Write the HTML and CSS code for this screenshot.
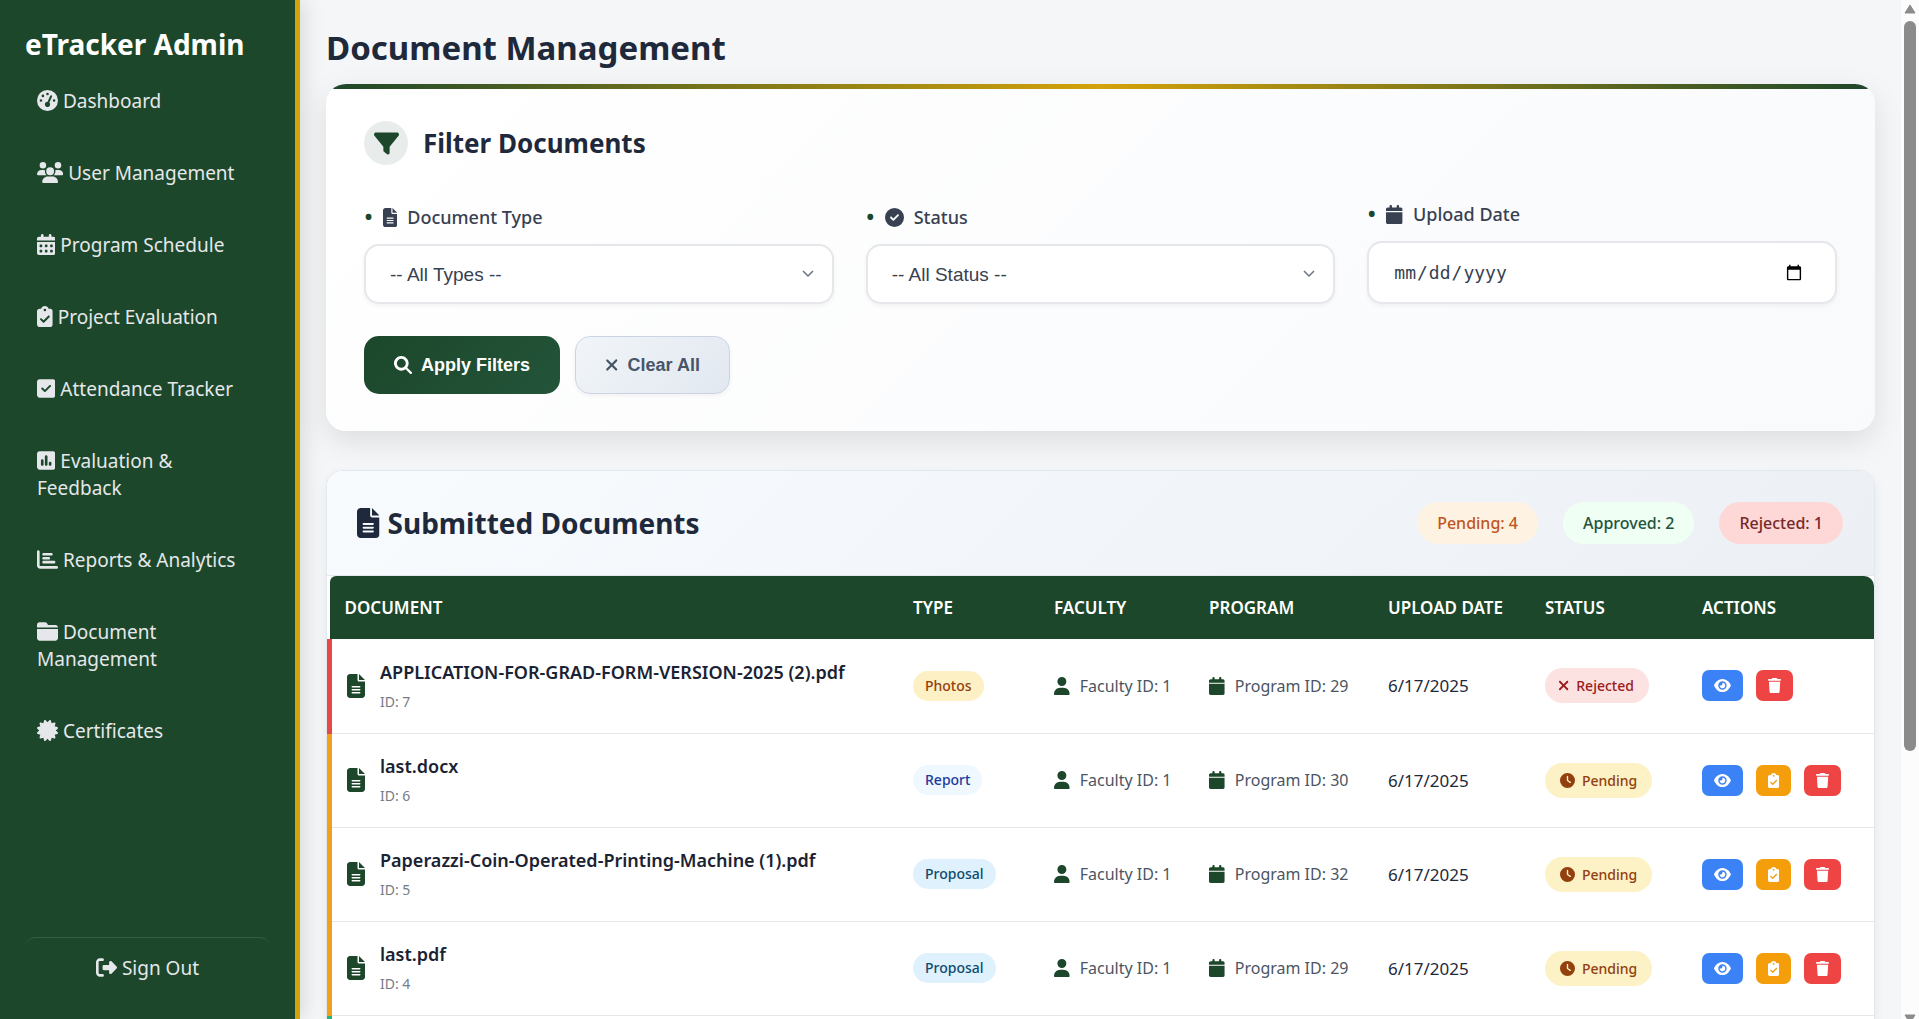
FILE: index.html
```html
<!DOCTYPE html>
<html lang="en">
<head>
<meta charset="utf-8">
<meta name="viewport" content="width=device-width, initial-scale=1">
<title>eTracker Admin - Document Management</title>
<link rel="stylesheet" href="styles.css">
</head>
<body>
<svg class="sprite" aria-hidden="true">
  <symbol id="i-gauge" viewBox="0 0 512 512"><path d="M0 256a256 256 0 1 1 512 0A256 256 0 1 1 0 256zM288 96a32 32 0 1 0 -64 0 32 32 0 1 0 64 0zM256 416c35.3 0 64-28.7 64-64c0-17.4-6.9-33.1-18.1-44.6L366 161.7c5.3-12.1-.2-26.3-12.3-31.6s-26.3 .2-31.6 12.3L257.9 288c-.6 0-1.3 0-1.9 0c-35.3 0-64 28.7-64 64s28.7 64 64 64zM176 144a32 32 0 1 0 -64 0 32 32 0 1 0 64 0zM96 288a32 32 0 1 0 0-64 32 32 0 1 0 0 64zm352-32a32 32 0 1 0 -64 0 32 32 0 1 0 64 0z"/></symbol>
  <symbol id="i-users" viewBox="0 0 640 512"><path d="M144 0a80 80 0 1 1 0 160A80 80 0 1 1 144 0zM512 0a80 80 0 1 1 0 160A80 80 0 1 1 512 0zM0 298.7C0 239.8 47.8 192 106.7 192h42.7c15.9 0 31 3.5 44.6 9.7c-1.3 7.2-1.9 14.7-1.9 22.3c0 38.2 16.8 72.5 43.3 96c-.2 0-.4 0-.7 0H21.3C9.6 320 0 310.4 0 298.7zM405.3 320c-.2 0-.4 0-.7 0c26.6-23.5 43.3-57.8 43.3-96c0-7.6-.7-15-1.9-22.3c13.6-6.3 28.7-9.7 44.6-9.7h42.7C592.2 192 640 239.8 640 298.7c0 11.8-9.6 21.3-21.3 21.3H405.3zM224 224a96 96 0 1 1 192 0 96 96 0 1 1 -192 0zM128 485.3C128 411.7 187.7 352 261.3 352H378.7C452.3 352 512 411.7 512 485.3c0 14.7-11.9 26.7-26.7 26.7H154.7c-14.7 0-26.7-11.9-26.7-26.7z"/></symbol>
  <symbol id="i-days" viewBox="0 0 448 512"><path d="M128 0c17.7 0 32 14.3 32 32V64H288V32c0-17.7 14.3-32 32-32s32 14.3 32 32V64h48c26.5 0 48 21.5 48 48v48H0V112C0 85.5 21.5 64 48 64H96V32c0-17.7 14.3-32 32-32zM0 192H448V464c0 26.5-21.5 48-48 48H48c-26.5 0-48-21.5-48-48V192zm64 80v32c0 8.8 7.2 16 16 16h32c8.8 0 16-7.2 16-16V272c0-8.8-7.2-16-16-16H80c-8.8 0-16 7.2-16 16zm128 0v32c0 8.8 7.2 16 16 16h32c8.8 0 16-7.2 16-16V272c0-8.8-7.2-16-16-16H208c-8.8 0-16 7.2-16 16zm144-16c-8.8 0-16 7.2-16 16v32c0 8.8 7.2 16 16 16h32c8.8 0 16-7.2 16-16V272c0-8.8-7.2-16-16-16H336zM64 400v32c0 8.8 7.2 16 16 16h32c8.8 0 16-7.2 16-16V400c0-8.8-7.2-16-16-16H80c-8.8 0-16 7.2-16 16zm144-16c-8.8 0-16 7.2-16 16v32c0 8.8 7.2 16 16 16h32c8.8 0 16-7.2 16-16V400c0-8.8-7.2-16-16-16H208zm112 16v32c0 8.8 7.2 16 16 16h32c8.8 0 16-7.2 16-16V400c0-8.8-7.2-16-16-16H336c-8.8 0-16 7.2-16 16z"/></symbol>
  <symbol id="i-calendar" viewBox="0 0 448 512"><path d="M96 32V64H48C21.5 64 0 85.5 0 112v48H448V112c0-26.5-21.5-48-48-48H352V32c0-17.7-14.3-32-32-32s-32 14.3-32 32V64H160V32c0-17.7-14.3-32-32-32S96 14.3 96 32zM448 192H0V464c0 26.5 21.5 48 48 48H400c26.5 0 48-21.5 48-48V192z"/></symbol>
  <symbol id="i-clipboard" viewBox="0 0 384 512"><path d="M192 0c-41.8 0-77.4 26.7-90.5 64H64C28.7 64 0 92.7 0 128V448c0 35.3 28.7 64 64 64H320c35.3 0 64-28.7 64-64V128c0-35.3-28.7-64-64-64H282.5C269.4 26.7 233.8 0 192 0zm0 64a32 32 0 1 1 0 64 32 32 0 1 1 0-64zM305 273L177 401c-9.4 9.4-24.6 9.4-33.9 0L79 337c-9.4-9.4-9.4-24.6 0-33.9s24.6-9.4 33.9 0l47 47L271 239c9.4-9.4 24.6-9.4 33.9 0s9.4 24.6 0 33.9z"/></symbol>
  <symbol id="i-square-check" viewBox="0 0 448 512"><path d="M64 32C28.7 32 0 60.7 0 96V416c0 35.3 28.7 64 64 64H384c35.3 0 64-28.7 64-64V96c0-35.3-28.7-64-64-64H64zM337 209L209 337c-9.4 9.4-24.6 9.4-33.9 0l-64-64c-9.4-9.4-9.4-24.6 0-33.9s24.6-9.4 33.9 0l47 47L303 175c9.4-9.4 24.6-9.4 33.9 0s9.4 24.6 0 33.9z"/></symbol>
  <symbol id="i-poll" viewBox="0 0 448 512"><path fill-rule="evenodd" d="M448 96c0-35.3-28.7-64-64-64H64C28.7 32 0 60.7 0 96V416c0 35.3 28.7 64 64 64H384c35.3 0 64-28.7 64-64V96zM256 160V352c0 17.7-14.3 32-32 32s-32-14.3-32-32V160c0-17.7 14.3-32 32-32s32 14.3 32 32zM96 256v96c0 17.7 14.3 32 32 32s32-14.3 32-32V256c0-17.7-14.3-32-32-32s-32 14.3-32 32zM320 288c-17.7 0-32 14.3-32 32v32c0 17.7 14.3 32 32 32s32-14.3 32-32V320c0-17.7-14.3-32-32-32z"/></symbol>
  <symbol id="i-chart" viewBox="0 0 512 512"><path d="M32 32c17.7 0 32 14.3 32 32V400c0 8.8 7.2 16 16 16H480c17.7 0 32 14.3 32 32s-14.3 32-32 32H80c-44.2 0-80-35.8-80-80V64C0 46.3 14.3 32 32 32zm96 96c0-17.7 14.3-32 32-32l192 0c17.7 0 32 14.3 32 32s-14.3 32-32 32H160c-17.7 0-32-14.3-32-32zm32 64H288c17.7 0 32 14.3 32 32s-14.3 32-32 32H160c-17.7 0-32-14.3-32-32s14.3-32 32-32zm0 96H416c17.7 0 32 14.3 32 32s-14.3 32-32 32H160c-17.7 0-32-14.3-32-32s14.3-32 32-32z"/></symbol>
  <symbol id="i-folder" viewBox="0 0 512 512"><path d="M448 480H64c-35.3 0-64-28.7-64-64V192H512V416c0 35.3-28.7 64-64 64zm64-320H0V96C0 60.7 28.7 32 64 32H192c20.1 0 39.1 9.5 51.2 25.6l19.2 25.6c6 8.1 15.5 12.8 25.6 12.8H448c35.3 0 64 28.7 64 64z"/></symbol>
  <symbol id="i-certificate" viewBox="0 0 512 512"><path d="M211 7.3C205 1 196-1.4 187.6 .8s-14.9 8.9-17.1 17.3L154.7 80.6l-62-17.5c-8.4-2.4-17.4 0-23.5 6.1s-8.5 15.1-6.1 23.5l17.5 62L18.1 170.6c-8.4 2.1-15 8.7-17.3 17.1S1 205 7.3 211l46.2 45L7.3 301C1 307-1.4 316 .8 324.4s8.9 14.9 17.3 17.1l62.5 15.8-17.5 62c-2.4 8.4 0 17.4 6.1 23.5s15.1 8.5 23.5 6.1l62-17.5 15.8 62.5c2.1 8.4 8.7 15 17.1 17.3s17.3-.2 23.4-6.4l45-46.2 45 46.2c6.1 6.2 15 8.7 23.4 6.4s14.9-8.9 17.1-17.3l15.8-62.5 62 17.5c8.4 2.4 17.4 0 23.5-6.1s8.5-15.1 6.1-23.5l-17.5-62 62.5-15.8c8.4-2.1 15-8.7 17.3-17.1s-.2-17.4-6.4-23.4l-46.2-45 46.2-45c6.2-6.1 8.7-15 6.4-23.4s-8.9-14.9-17.3-17.1l-62.5-15.8 17.5-62c2.4-8.4 0-17.4-6.1-23.5s-15.1-8.5-23.5-6.1l-62 17.5L341.4 18.1c-2.1-8.4-8.7-15-17.1-17.3S307 1 301 7.3L256 53.5 211 7.3z"/></symbol>
  <symbol id="i-signout" viewBox="0 0 512 512"><path d="M377.9 105.9L500.7 228.7c7.2 7.2 11.3 17.1 11.3 27.3s-4.1 20.1-11.3 27.3L377.9 406.1c-6.4 6.4-15 9.9-24 9.9c-18.7 0-33.9-15.2-33.9-33.9l0-62.1-128 0c-17.7 0-32-14.3-32-32l0-64c0-17.7 14.3-32 32-32l128 0 0-62.1c0-18.7 15.2-33.9 33.9-33.9c9 0 17.6 3.6 24 9.9zM160 96L96 96c-17.7 0-32 14.3-32 32l0 256c0 17.7 14.3 32 32 32l64 0c17.7 0 32 14.3 32 32s-14.3 32-32 32l-64 0c-53 0-96-43-96-96L0 128C0 75 43 32 96 32l64 0c17.7 0 32 14.3 32 32s-14.3 32-32 32z"/></symbol>
  <symbol id="i-filter" viewBox="0 0 512 512"><path d="M3.9 54.9C10.5 40.9 24.5 32 40 32H472c15.5 0 29.5 8.9 36.1 22.9s4.6 30.5-5.2 42.5L320 320.9V448c0 12.1-6.8 23.2-17.7 28.6s-23.8 4.3-33.5-3l-64-48c-8.1-6-12.8-15.5-12.8-25.6V320.9L9 97.3C-.7 85.4-2.8 68.8 3.9 54.9z"/></symbol>
  <symbol id="i-file" viewBox="0 0 384 512"><path d="M64 0C28.7 0 0 28.7 0 64V448c0 35.3 28.7 64 64 64H320c35.3 0 64-28.7 64-64V160H256c-17.7 0-32-14.3-32-32V0H64zM256 0V128H384L256 0zM112 256H272c8.8 0 16 7.2 16 16s-7.2 16-16 16H112c-8.8 0-16-7.2-16-16s7.2-16 16-16zm0 64H272c8.8 0 16 7.2 16 16s-7.2 16-16 16H112c-8.8 0-16-7.2-16-16s7.2-16 16-16zm0 64H272c8.8 0 16 7.2 16 16s-7.2 16-16 16H112c-8.8 0-16-7.2-16-16s7.2-16 16-16z"/></symbol>
  <symbol id="i-circle-check" viewBox="0 0 512 512"><path d="M256 512A256 256 0 1 0 256 0a256 256 0 1 0 0 512zM369 209L241 337c-9.4 9.4-24.6 9.4-33.9 0l-64-64c-9.4-9.4-9.4-24.6 0-33.9s24.6-9.4 33.9 0l47 47L335 175c9.4-9.4 24.6-9.4 33.9 0s9.4 24.6 0 33.9z"/></symbol>
  <symbol id="i-search" viewBox="0 0 512 512"><path d="M416 208c0 45.9-14.9 88.3-40 122.7L502.6 457.4c12.5 12.5 12.5 32.8 0 45.3s-32.8 12.5-45.3 0L330.7 376c-34.4 25.2-76.8 40-122.7 40C93.1 416 0 322.9 0 208S93.1 0 208 0S416 93.1 416 208zM208 336a128 128 0 1 0 0-256 128 128 0 1 0 0 256z"/></symbol>
  <symbol id="i-x" viewBox="0 0 384 512"><path d="M342.6 150.6c12.5-12.5 12.5-32.8 0-45.3s-32.8-12.5-45.3 0L192 210.7 86.6 105.4c-12.5-12.5-32.8-12.5-45.3 0s-12.5 32.8 0 45.3L146.7 256 41.4 361.4c-12.5 12.5-12.5 32.8 0 45.3s32.8 12.5 45.3 0L192 301.3 297.4 406.6c12.5 12.5 32.8 12.5 45.3 0s12.5-32.8 0-45.3L237.3 256 342.6 150.6z"/></symbol>
  <symbol id="i-user" viewBox="0 0 448 512"><path d="M224 256A128 128 0 1 0 224 0a128 128 0 1 0 0 256zm-45.7 48C79.8 304 0 383.8 0 482.3C0 498.7 13.3 512 29.7 512H418.3c16.4 0 29.7-13.3 29.7-29.7C448 383.8 368.2 304 269.7 304H178.3z"/></symbol>
  <symbol id="i-clock" viewBox="0 0 512 512"><path d="M256 0a256 256 0 1 1 0 512A256 256 0 1 1 256 0zM232 120V256c0 8 4 15.5 10.7 20l96 64c11 7.4 25.9 4.4 33.3-6.7s4.4-25.9-6.7-33.3L280 243.2V120c0-13.3-10.7-24-24-24s-24 10.7-24 24z"/></symbol>
  <symbol id="i-eye" viewBox="0 0 576 512"><path d="M288 32c-80.8 0-145.5 36.8-192.6 80.6C48.6 156 17.3 208 2.5 243.7c-3.3 7.9-3.3 16.7 0 24.6C17.3 304 48.6 356 95.4 399.4C142.5 443.2 207.2 480 288 480s145.5-36.8 192.6-80.6c46.8-43.5 78.1-95.4 93-131.1c3.3-7.9 3.3-16.7 0-24.6c-14.9-35.7-46.2-87.7-93-131.1C433.5 68.8 368.8 32 288 32zM144 256a144 144 0 1 1 288 0 144 144 0 1 1 -288 0zm144-64c0 35.3-28.7 64-64 64c-7.1 0-13.9-1.2-20.3-3.3c-5.5-1.8-11.9 1.6-11.7 7.4c.3 6.9 1.3 13.8 3.2 20.7c13.7 51.2 66.4 81.6 117.6 67.9s81.6-66.4 67.9-117.6c-11.1-41.5-47.8-69.4-88.6-71.1c-5.8-.2-9.2 6.1-7.4 11.7c2.1 6.4 3.3 13.2 3.3 20.3z"/></symbol>
  <symbol id="i-trash" viewBox="0 0 448 512"><path d="M135.2 17.7L128 32H32C14.3 32 0 46.3 0 64S14.3 96 32 96H416c17.7 0 32-14.3 32-32s-14.3-32-32-32H320l-7.2-14.3C307.4 6.8 296.3 0 284.2 0H163.8c-12.1 0-23.2 6.8-28.6 17.7zM416 128H32L53.2 467c1.6 25.3 22.6 45 47.9 45H346.9c25.3 0 46.3-19.7 47.9-45L416 128z"/></symbol>
</svg>

<aside class="sidebar">
  <h2 class="brand">eTracker Admin</h2>
  <nav class="nav">
    <a class="nav-link" href="#"><svg class="icon" viewBox="0 0 512 512"><use href="#i-gauge"/></svg> Dashboard</a>
    <a class="nav-link" href="#"><svg class="icon" viewBox="0 0 640 512"><use href="#i-users"/></svg> User Management</a>
    <a class="nav-link" href="#"><svg class="icon" viewBox="0 0 448 512"><use href="#i-days"/></svg> Program Schedule</a>
    <a class="nav-link" href="#"><svg class="icon" viewBox="0 0 384 512"><use href="#i-clipboard"/></svg> Project Evaluation</a>
    <a class="nav-link" href="#"><svg class="icon" viewBox="0 0 448 512"><use href="#i-square-check"/></svg> Attendance Tracker</a>
    <a class="nav-link" href="#"><svg class="icon" viewBox="0 0 448 512"><use href="#i-poll"/></svg> Evaluation &amp; Feedback</a>
    <a class="nav-link" href="#"><svg class="icon" viewBox="0 0 512 512"><use href="#i-chart"/></svg> Reports &amp; Analytics</a>
    <a class="nav-link" href="#"><svg class="icon" viewBox="0 0 512 512"><use href="#i-folder"/></svg> Document Management</a>
    <a class="nav-link" href="#"><svg class="icon" viewBox="0 0 512 512"><use href="#i-certificate"/></svg> Certificates</a>
  </nav>
  <a class="sign-out" href="#"><svg class="icon" viewBox="0 0 512 512"><use href="#i-signout"/></svg> Sign Out</a>
</aside>

<main class="main">
  <h1 class="page-title">Document Management</h1>

  <section class="card filter-card">
    <h2 class="filter-title"><span class="filter-badge"><svg class="icon" viewBox="0 0 512 512"><use href="#i-filter"/></svg></span>Filter Documents</h2>
    <form class="filter-form">
      <div class="fields">
        <div class="field">
          <label class="label" for="type"><span class="dot">•</span><svg class="icon" viewBox="0 0 384 512"><use href="#i-file"/></svg>Document Type</label>
          <div class="select-box">
            <select class="control" id="type"><option>-- All Types --</option><option>Photos</option><option>Report</option><option>Proposal</option></select>
            <svg class="chevron" viewBox="0 0 12 8"><path d="M1 1l5 5 5-5"/></svg>
          </div>
        </div>
        <div class="field">
          <label class="label" for="status"><span class="dot">•</span><svg class="icon" viewBox="0 0 512 512"><use href="#i-circle-check"/></svg>Status</label>
          <div class="select-box">
            <select class="control" id="status"><option>-- All Status --</option><option>Pending</option><option>Approved</option><option>Rejected</option></select>
            <svg class="chevron" viewBox="0 0 12 8"><path d="M1 1l5 5 5-5"/></svg>
          </div>
        </div>
        <div class="field">
          <label class="label" for="date"><span class="dot">•</span><svg class="icon" viewBox="0 0 448 512"><use href="#i-calendar"/></svg>Upload Date</label>
          <input class="control control-date" id="date" type="date">
        </div>
      </div>
      <div class="buttons">
        <button class="btn btn-apply" type="button"><svg class="icon" viewBox="0 0 512 512"><use href="#i-search"/></svg>Apply Filters</button>
        <button class="btn btn-clear" type="reset"><svg class="icon" viewBox="0 0 384 512"><use href="#i-x"/></svg>Clear All</button>
      </div>
    </form>
  </section>

  <section class="card table-card">
    <header class="table-header">
      <h2 class="table-title"><svg class="icon" viewBox="0 0 384 512"><use href="#i-file"/></svg>Submitted Documents</h2>
      <div class="stats">
        <span class="stat stat-pending">Pending: 4</span>
        <span class="stat stat-approved">Approved: 2</span>
        <span class="stat stat-rejected">Rejected: 1</span>
      </div>
    </header>
    <table class="docs">
      <colgroup><col><col class="col-type"><col class="col-faculty"><col class="col-program"><col class="col-date"><col class="col-status"><col class="col-actions"></colgroup>
      <thead>
        <tr><th>DOCUMENT</th><th>TYPE</th><th>FACULTY</th><th>PROGRAM</th><th>UPLOAD DATE</th><th>STATUS</th><th>ACTIONS</th></tr>
      </thead>
      <tbody>
        <tr class="row-rejected">
          <td><div class="doc"><svg class="icon" viewBox="0 0 384 512"><use href="#i-file"/></svg><div><div class="doc-name">APPLICATION-FOR-GRAD-FORM-VERSION-2025 (2).pdf</div><div class="doc-id">ID: 7</div></div></div></td>
          <td><span class="type type-photos">Photos</span></td>
          <td><div class="ref"><svg class="icon" viewBox="0 0 448 512"><use href="#i-user"/></svg>Faculty ID: 1</div></td>
          <td><div class="ref"><svg class="icon" viewBox="0 0 448 512"><use href="#i-calendar"/></svg>Program ID: 29</div></td>
          <td>6/17/2025</td>
          <td><span class="status status-rejected"><svg class="icon" viewBox="0 0 384 512"><use href="#i-x"/></svg>Rejected</span></td>
          <td><div class="actions"><button class="act act-view" type="button" aria-label="View"><svg class="icon" viewBox="0 0 576 512"><use href="#i-eye"/></svg></button><button class="act act-delete" type="button" aria-label="Delete"><svg class="icon" viewBox="0 0 448 512"><use href="#i-trash"/></svg></button></div></td>
        </tr>
        <tr class="row-pending">
          <td><div class="doc"><svg class="icon" viewBox="0 0 384 512"><use href="#i-file"/></svg><div><div class="doc-name">last.docx</div><div class="doc-id">ID: 6</div></div></div></td>
          <td><span class="type type-report">Report</span></td>
          <td><div class="ref"><svg class="icon" viewBox="0 0 448 512"><use href="#i-user"/></svg>Faculty ID: 1</div></td>
          <td><div class="ref"><svg class="icon" viewBox="0 0 448 512"><use href="#i-calendar"/></svg>Program ID: 30</div></td>
          <td>6/17/2025</td>
          <td><span class="status status-pending"><svg class="icon" viewBox="0 0 512 512"><use href="#i-clock"/></svg>Pending</span></td>
          <td><div class="actions"><button class="act act-view" type="button" aria-label="View"><svg class="icon" viewBox="0 0 576 512"><use href="#i-eye"/></svg></button><button class="act act-review" type="button" aria-label="Review"><svg class="icon" viewBox="0 0 384 512"><use href="#i-clipboard"/></svg></button><button class="act act-delete" type="button" aria-label="Delete"><svg class="icon" viewBox="0 0 448 512"><use href="#i-trash"/></svg></button></div></td>
        </tr>
        <tr class="row-pending">
          <td><div class="doc"><svg class="icon" viewBox="0 0 384 512"><use href="#i-file"/></svg><div><div class="doc-name">Paperazzi-Coin-Operated-Printing-Machine (1).pdf</div><div class="doc-id">ID: 5</div></div></div></td>
          <td><span class="type type-proposal">Proposal</span></td>
          <td><div class="ref"><svg class="icon" viewBox="0 0 448 512"><use href="#i-user"/></svg>Faculty ID: 1</div></td>
          <td><div class="ref"><svg class="icon" viewBox="0 0 448 512"><use href="#i-calendar"/></svg>Program ID: 32</div></td>
          <td>6/17/2025</td>
          <td><span class="status status-pending"><svg class="icon" viewBox="0 0 512 512"><use href="#i-clock"/></svg>Pending</span></td>
          <td><div class="actions"><button class="act act-view" type="button" aria-label="View"><svg class="icon" viewBox="0 0 576 512"><use href="#i-eye"/></svg></button><button class="act act-review" type="button" aria-label="Review"><svg class="icon" viewBox="0 0 384 512"><use href="#i-clipboard"/></svg></button><button class="act act-delete" type="button" aria-label="Delete"><svg class="icon" viewBox="0 0 448 512"><use href="#i-trash"/></svg></button></div></td>
        </tr>
        <tr class="row-pending">
          <td><div class="doc"><svg class="icon" viewBox="0 0 384 512"><use href="#i-file"/></svg><div><div class="doc-name">last.pdf</div><div class="doc-id">ID: 4</div></div></div></td>
          <td><span class="type type-proposal">Proposal</span></td>
          <td><div class="ref"><svg class="icon" viewBox="0 0 448 512"><use href="#i-user"/></svg>Faculty ID: 1</div></td>
          <td><div class="ref"><svg class="icon" viewBox="0 0 448 512"><use href="#i-calendar"/></svg>Program ID: 29</div></td>
          <td>6/17/2025</td>
          <td><span class="status status-pending"><svg class="icon" viewBox="0 0 512 512"><use href="#i-clock"/></svg>Pending</span></td>
          <td><div class="actions"><button class="act act-view" type="button" aria-label="View"><svg class="icon" viewBox="0 0 576 512"><use href="#i-eye"/></svg></button><button class="act act-review" type="button" aria-label="Review"><svg class="icon" viewBox="0 0 384 512"><use href="#i-clipboard"/></svg></button><button class="act act-delete" type="button" aria-label="Delete"><svg class="icon" viewBox="0 0 448 512"><use href="#i-trash"/></svg></button></div></td>
        </tr>
        <tr class="row-approved"><td colspan="7"></td></tr>
        <tr class="row-approved"><td colspan="7"></td></tr>
        <tr class="row-pending"><td colspan="7"></td></tr>
      </tbody>
    </table>
  </section>
</main>

<div class="scrollbar" aria-hidden="true">
  <svg class="arrow" viewBox="0 0 12 10"><path d="M6 1L11 9H1z"/></svg>
  <div class="track"><div class="thumb"></div></div>
  <svg class="arrow arrow-down" viewBox="0 0 12 10"><path d="M6 9L1 1H11z"/></svg>
</div>
</body>
</html>
```
FILE: styles.css
```css
* { box-sizing: border-box; }

body {
  margin: 0;
  height: 100vh;
  display: flex;
  overflow: hidden;
  background: #f5f6f8;
  color: #1e293b;
  font-family: "Noto Sans", "Open Sans", sans-serif;
  font-size: 17px;
}

h1, h2 { margin: 0; font-weight: 700; }

.sprite { position: absolute; width: 0; height: 0; }
.icon { display: block; height: 18px; width: auto; flex: none; fill: currentColor; }

/* Sidebar */
.sidebar {
  position: relative;
  z-index: 1;
  flex: 0 0 300px;
  display: flex;
  flex-direction: column;
  padding: 25px 25px 20px;
  background: #1c472a;
  border-right: 5px solid #d4a20a;
  box-shadow: 4px 0 20px rgba(0, 0, 0, 0.12);
}
.brand { margin-bottom: 13px; color: #fff; font-size: 28px; line-height: 38px; white-space: nowrap; }
.nav { display: flex; flex-direction: column; gap: 21px; }
.nav-link, .sign-out { color: #e5e7eb; font-size: 19px; line-height: 27px; text-decoration: none; }
.nav-link { padding: 12px 20px 12px 12px; }
.nav-link .icon, .sign-out .icon { display: inline-block; height: 21px; vertical-align: -3px; }
.sign-out {
  margin-top: auto;
  padding: 17px 12px;
  border-top: 1px solid rgba(255, 255, 255, 0.12);
  border-radius: 10px;
  text-align: center;
}

/* Content */
.main { flex: 1; min-width: 0; padding: 25px 26px 35px; overflow-y: auto; scrollbar-width: none; }
.page-title { margin-bottom: 14px; font-size: 33px; line-height: 45px; }

.card { position: relative; overflow: hidden; }

/* Scrollbar of the content area */
.scrollbar { flex: 0 0 18px; display: flex; flex-direction: column; align-items: center; gap: 7px; padding-top: 4px; background: #fcfcfc; }
.arrow { flex: none; width: 12px; height: 10px; fill: #8b8b8b; stroke: #8b8b8b; stroke-linejoin: round; }
.track { flex: 1; width: 12px; }
.thumb { height: 74%; border-radius: 6px; background: #8b8b8b; }
.arrow-down { margin-bottom: -5px; }

/* Filters */
.filter-card {
  padding: 37px 38px;
  border-radius: 20px;
  background: linear-gradient(135deg, #fff, #f9fafc);
  box-shadow: 0 10px 30px rgba(0, 0, 0, 0.1);
}
.filter-card::before {
  content: "";
  position: absolute;
  inset: 0 0 auto;
  height: 5px;
  background: linear-gradient(90deg, #1c472a, #d4a20a, #1c472a);
}
.filter-title { display: flex; align-items: center; gap: 15px; margin-bottom: 36px; font-size: 26px; line-height: 44px; }
.filter-badge {
  display: flex;
  align-items: center;
  justify-content: center;
  width: 44px;
  height: 44px;
  border-radius: 50%;
  background: #e8ecea;
  color: #1c472a;
}
.filter-badge .icon { height: 25px; }
.fields { display: grid; grid-template-columns: repeat(3, 1fr); gap: 32px; align-items: end; margin-bottom: 32px; }
.field { display: flex; flex-direction: column; gap: 14px; }
.label { display: flex; align-items: center; gap: 10px; color: #374151; font-size: 18px; font-weight: 500; line-height: 26px; }
.label .icon { height: 19px; }
.dot { width: 9px; color: #1c472a; font-size: 24px; }
.select-box { display: grid; align-items: center; }
.select-box > * { grid-area: 1 / 1; }
.control {
  width: 100%;
  height: 60px;
  padding: 0 24px;
  border: 2px solid #e5e7eb;
  border-radius: 15px;
  background: #fff;
  box-shadow: 0 2px 4px rgba(0, 0, 0, 0.05);
  color: #374151;
  font-family: "Liberation Sans", sans-serif;
  font-size: 19px;
  appearance: none;
}
.control-date { height: 63px; padding-right: 30px; font-family: "DejaVu Sans Mono", monospace; font-size: 18px; }
.chevron { justify-self: end; width: 12px; margin-right: 20px; fill: none; stroke: #6b7280; stroke-width: 1.5; pointer-events: none; }

.buttons { display: flex; gap: 15px; }
.btn {
  display: flex;
  align-items: center;
  gap: 9px;
  height: 58px;
  padding: 0 30px;
  border: 0;
  border-radius: 15px;
  font-family: "Liberation Sans", sans-serif;
  font-size: 18px;
  font-weight: 700;
}
.btn-apply { background: linear-gradient(135deg, #1c472a, #23543a); color: #fff; }
.btn-clear {
  padding: 0 29px;
  border: 1px solid #cbd5e1;
  background: linear-gradient(135deg, #f1f5f9, #e2e8f0);
  box-shadow: 0 2px 4px rgba(0, 0, 0, 0.05);
  color: #475569;
}

/* Documents table */
.table-card {
  margin-top: 39px;
  border: 1px solid #e2e8f0;
  border-radius: 16px;
  background: #fff;
  box-shadow: 0 4px 12px rgba(0, 0, 0, 0.06);
}
.table-header {
  display: flex;
  align-items: center;
  justify-content: space-between;
  padding: 31px 31px 31px 30px;
  background: linear-gradient(135deg, #f8fbfe, #ecf0f5);
  border-bottom: 1px solid #e2e8f0;
}
.table-title { display: flex; align-items: center; gap: 8px; font-size: 28px; line-height: 42px; }
.table-title .icon { height: 30px; }
.stats { display: flex; gap: 25px; }
.stat { padding: 0 20px; border-radius: 21px; font-size: 16px; font-weight: 500; line-height: 42px; }
.stat-pending { background: #fef3e2; color: #c05621; }
.stat-approved { background: #f0fff4; color: #22543d; }
.stat-rejected { background: #fed7d7; color: #742a2a; }

.docs { width: 100%; table-layout: fixed; border-collapse: collapse; }
.col-type { width: 141px; }
.col-faculty { width: 155px; }
.col-program { width: 179px; }
.col-date, .col-status { width: 157px; }
.col-actions { width: 187px; }
.docs th { height: 63px; padding: 0 15px; background: #1c472a; color: #fff; font-size: 17px; font-weight: 600; text-align: left; white-space: nowrap; }
.docs th:first-child { border-top-left-radius: 6px; }
.docs th:last-child { border-top-right-radius: 10px; }
.docs td { height: 94px; padding: 0 15px; border-bottom: 1px solid #e5e7eb; white-space: nowrap; }
.row-rejected { border-left: 5px solid #e94848; }
.row-pending { border-left: 5px solid #f0a01c; }
.row-approved { border-left: 5px solid #22b47c; }

.doc { display: flex; align-items: center; gap: 15px; }
.doc > .icon { height: 24px; color: #1c472a; }
.doc-name { margin-bottom: 6px; font-size: 18px; font-weight: 600; line-height: 26px; color: #1a2233; }
.doc-id { color: #767c87; font-size: 14px; line-height: 22px; }
.type { display: inline-block; padding: 0 12px; border-radius: 15px; font-size: 14px; font-weight: 500; line-height: 30px; vertical-align: middle; }
.type-photos { background: #fdf0c4; color: #92400e; }
.type-report { background: #eff8ff; color: #1e3a9a; }
.type-proposal { background: #dff1fc; color: #0c4a6e; }
.ref { display: flex; align-items: center; gap: 10px; color: #4b5563; font-size: 16px; }
.ref .icon { color: #1c472a; }
.status { display: inline-flex; align-items: center; gap: 7px; height: 35px; padding: 0 15px; border-radius: 18px; font-size: 14px; font-weight: 500; vertical-align: middle; }
.status .icon { height: 15px; }
.status-rejected { padding-left: 13px; background: #fde2e2; color: #991b1b; }
.status-pending { background: #fdf1c6; color: #92400e; }
.actions { display: flex; gap: 13px; }
.act { height: 31px; padding: 0 12px; border: 0; border-radius: 7px; color: #fff; }
.act .icon { height: 15px; }
.act-view { background: #3b82f6; }
.act-review { background: #f59e0b; }
.act-delete { background: #ef4444; }
```
